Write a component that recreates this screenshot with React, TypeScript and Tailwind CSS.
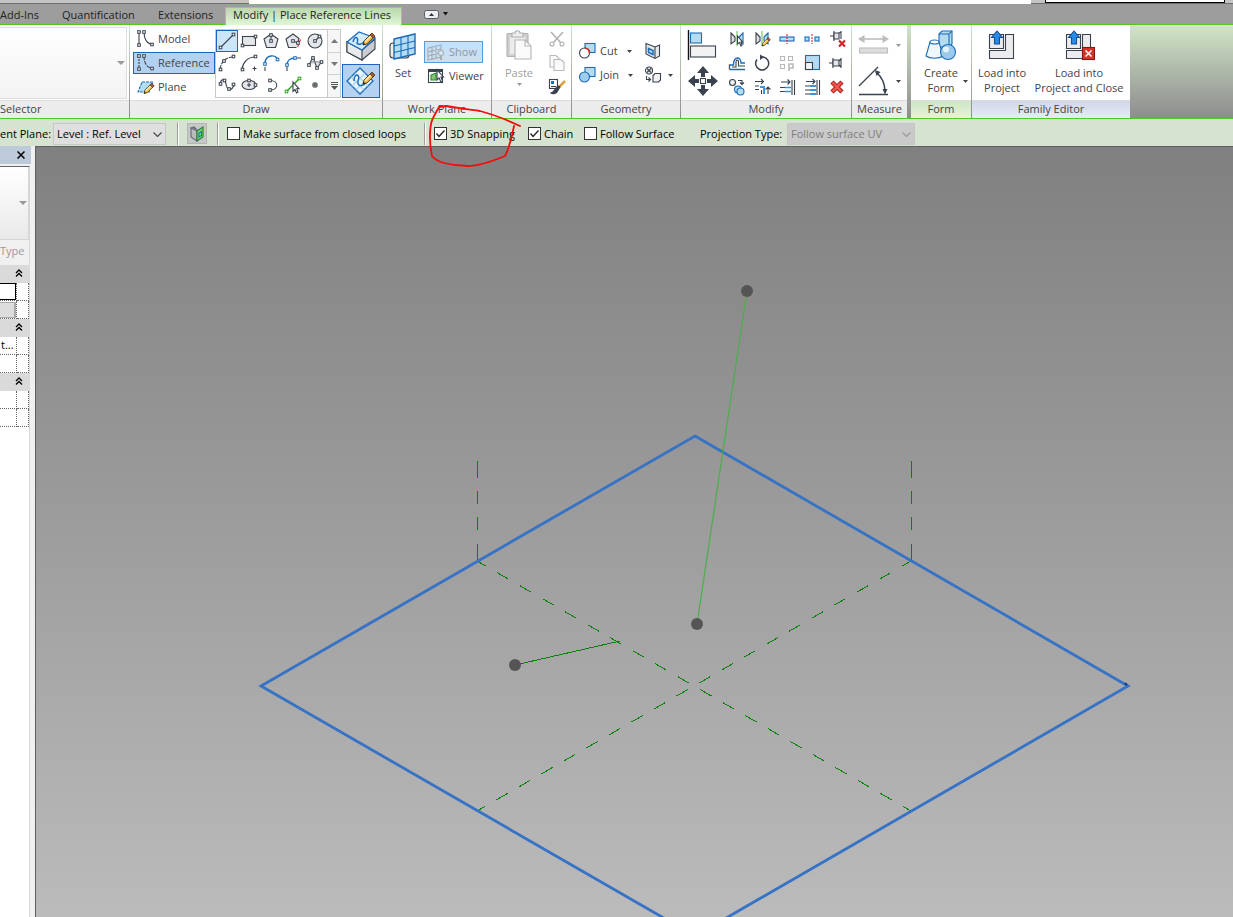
import type { ReactNode } from "react";

const INK = "#39424e";
const BLUE = "#1b6cb8";
const SKY = "#b4dcf3";
const FADED = "#b9b9b9";

function Icon({ size = 18, children }: { size?: number; children: ReactNode }) {
  return (
    <svg
      width={size}
      height={size}
      viewBox={`0 0 ${size} ${size}`}
      fill="none"
      stroke={INK}
      strokeWidth={1.1}
      className="shrink-0"
      aria-hidden="true"
    >
      {children}
    </svg>
  );
}

// Square grips drawn on the sketch icons
function Grips({ at, color = INK }: { at: [number, number][]; color?: string }) {
  return (
    <>
      {at.map(([x, y]) => (
        <rect
          key={`${x}-${y}`}
          x={x - 1.3}
          y={y - 1.3}
          width={2.6}
          height={2.6}
          fill="#fff"
          stroke={color}
          strokeWidth={1}
        />
      ))}
    </>
  );
}

function Pencil() {
  return (
    <>
      <path d="M0 10L1 6L8 -1L11 2L4 9Z" fill="#f6b93f" stroke="#4a3a20" strokeWidth={0.9} />
      <path d="M2 7L9 0" stroke="#fff0b8" strokeWidth={1.4} />
      <path d="M7 0L9 -2L12 1L10 3Z" fill="#a3583a" stroke="#5b2d1c" strokeWidth={0.8} />
      <path d="M0 10L0.6 7.6L2.4 9.4Z" fill="#222" stroke="none" />
    </>
  );
}

function Caret({ faded = false }: { faded?: boolean }) {
  return (
    <svg width="5" height="3" viewBox="0 0 5 3" className="shrink-0" aria-hidden="true">
      <path d="M0 0H5L2.5 3Z" fill={faded ? "#999" : "#444"} />
    </svg>
  );
}

function Panel({
  title,
  className,
  titleClass = "bg-[#ececec] text-center",
  children,
}: {
  title: string;
  className: string;
  titleClass?: string;
  children: ReactNode;
}) {
  return (
    <section className={`flex shrink-0 flex-col bg-white ${className}`}>
      <div className="flex h-[75px]">{children}</div>
      <h2 className={`h-[18px] border-t border-[#dcdcdc] leading-4 whitespace-nowrap ${titleClass}`}>{title}</h2>
    </section>
  );
}

const drawTools: { name: string; icon: ReactNode }[] = [
  {
    name: "Line",
    icon: (
      <>
        <path d="M2 16L16 2" />
        <Grips at={[[2.5, 15.5], [15.5, 2.5]]} />
      </>
    ),
  },
  {
    name: "Rectangle",
    icon: (
      <>
        <rect x="2.5" y="4.5" width="13" height="9" fill="#e4e6ea" />
        <Grips at={[[2.5, 13.5], [15.5, 4.5]]} />
      </>
    ),
  },
  {
    name: "Inscribed Polygon",
    icon: (
      <>
        <path d="M9 2L16 7L13.5 15.5H4.5L2 7Z" fill="#e4e6ea" />
        <path d="M9 9V3" />
        <Grips at={[[9, 9], [9, 3]]} />
      </>
    ),
  },
  {
    name: "Circumscribed Polygon",
    icon: (
      <>
        <path d="M12.5 15.5H4.5L2 7L9 2L15 6.5L14 10" fill="#e4e6ea" />
        <path d="M16.5 7.5L13 16.5" stroke="#e02020" strokeDasharray="3 2" />
        <path d="M9 9L14 11" />
        <Grips at={[[9, 9], [14, 11]]} />
      </>
    ),
  },
  {
    name: "Circle",
    icon: (
      <>
        <circle cx="9" cy="9" r="7" fill="#e4e6ea" />
        <path d="M9 9L13.5 4.5" />
        <Grips at={[[9, 9], [13.5, 4.5]]} />
      </>
    ),
  },
  {
    name: "Start-End-Radius Arc",
    icon: (
      <>
        <path d="M2 15C3 8 8 3 15 3" strokeDasharray="4 1" />
        <Grips at={[[2.5, 15.5], [6, 7], [15.5, 2.5]]} />
      </>
    ),
  },
  {
    name: "Center-ends Arc",
    icon: (
      <>
        <path d="M2 15C3 8 8 3 15 3" />
        <path d="M14.5 12.5V16.5M12.5 14.5H16.5" />
        <Grips at={[[2.5, 15.5], [15.5, 2.5]]} />
      </>
    ),
  },
  {
    name: "Tangent End Arc",
    icon: (
      <>
        <path d="M3 13V17" />
        <path d="M3 10C3 0 14 0 16 6" stroke={BLUE} strokeWidth={1.4} />
        <Grips at={[[3, 10], [15.5, 5.5]]} color={BLUE} />
      </>
    ),
  },
  {
    name: "Fillet Arc",
    icon: (
      <>
        <path d="M3 13V17M13 4H17" />
        <path d="M3 11C3 7 6 4 11 4" stroke={BLUE} strokeWidth={1.4} />
        <Grips at={[[3, 11], [11, 4]]} color={BLUE} />
      </>
    ),
  },
  {
    name: "Spline",
    icon: (
      <>
        <path d="M3 11L7 3L11 14L15.5 8" fill="#e4e6ea" />
        <path d="M3 11C6 5 12 9 15.5 8" stroke="#8a9099" />
        <Grips at={[[3, 11], [7, 4], [11, 14], [15.5, 8]]} />
      </>
    ),
  },
  {
    name: "Spline Through Points",
    icon: (
      <>
        <path d="M2 8C3 2 7 3 8 8C9 15 14 15 16 9" />
        <Grips at={[[2.5, 8], [6.5, 4.5], [11, 13], [15.5, 8.5]]} />
      </>
    ),
  },
  {
    name: "Ellipse",
    icon: (
      <>
        <ellipse cx="9" cy="9" rx="7" ry="4.5" fill="#e4e6ea" />
        <path d="M9 7V11M7 9H11" />
        <Grips at={[[9, 4.5], [15.5, 9]]} />
      </>
    ),
  },
  {
    name: "Partial Ellipse",
    icon: (
      <>
        <path d="M8 4.5C17 4.5 17 14 8 14" />
        <Grips at={[[8, 4.5], [8, 14]]} />
      </>
    ),
  },
  {
    name: "Pick Lines",
    icon: (
      <>
        <path d="M2 16L16 2" stroke="#2ba61c" strokeWidth={1.5} />
        <Grips at={[[2.5, 15.5], [15.5, 2.5]]} color="#2ba61c" />
        <path d="M9 6V15.5L11 13.5L12.5 17L14 16L12.8 12.8H15Z" fill="#fff" />
      </>
    ),
  },
  {
    name: "Point Element",
    icon: <circle cx="9" cy="9" r="2.5" fill="#666" stroke="#8a8f98" />,
  },
];

const modifyTools: { name: string; icon: ReactNode }[] = [
  {
    name: "Mirror - Pick Axis",
    icon: (
      <>
        <path d="M3 3L7 7V11L3 14Z" fill="#ddd" />
        <path d="M15 3L11 7V11L15 14Z" fill={SKY} stroke={BLUE} />
        <path d="M9 1V16" stroke="#6fc25c" />
        <path d="M9.5 6V14L11.5 12.5L13 16L14 15L13 12H14.5Z" fill="#fff" />
      </>
    ),
  },
  {
    name: "Mirror - Draw Axis",
    icon: (
      <>
        <path d="M3 3L7 7V11L3 14Z" fill="#ddd" />
        <path d="M15 3L11 7V11L15 14Z" fill={SKY} stroke={BLUE} />
        <path d="M9 1V16" stroke="#6fc25c" />
        <g transform="translate(9 9) scale(.7)">
          <Pencil />
        </g>
      </>
    ),
  },
  {
    name: "Split Element",
    icon: (
      <>
        <rect x="2" y="7" width="14" height="4" fill={SKY} stroke={BLUE} />
        <path d="M9 4V14" stroke="#d22" strokeDasharray="2 1" />
      </>
    ),
  },
  {
    name: "Split with Gap",
    icon: (
      <>
        <rect x="2" y="7" width="4" height="4" fill={SKY} stroke={BLUE} />
        <rect x="12" y="7" width="4" height="4" fill={SKY} stroke={BLUE} />
        <path d="M9 4V14" stroke="#d22" strokeDasharray="2 1" />
      </>
    ),
  },
  {
    name: "Unpin",
    icon: (
      <>
        <path d="M2 6H6M6 1V11M13 1V9M11 3L13 2" />
        <path d="M6 3H11V9H6Z" fill="#e6e6e6" />
        <path d="M11 10.5L17 16.5M17 10.5L11 16.5" stroke="#d02626" strokeWidth={2.2} />
      </>
    ),
  },
  {
    name: "Offset",
    icon: (
      <>
        <path d="M1.5 15.5H17M1.5 15.5V11H5.5C5.5 2 13 2 13 9H17" stroke={BLUE} strokeWidth={1.4} />
        <path d="M4 13H8V8C8 5.5 10.5 5.5 10.5 8V12H17" />
      </>
    ),
  },
  {
    name: "Rotate",
    icon: (
      <>
        <path d="M4 5.5A6.5 6.5 0 1 0 10 3" strokeWidth={1.5} />
        <path d="M7 0.5L11 3L7 6Z" fill={INK} stroke="none" />
      </>
    ),
  },
  {
    name: "Array",
    icon: (
      <g stroke={FADED}>
        <rect x="2.5" y="2.5" width="4" height="4" />
        <rect x="10.5" y="2.5" width="4" height="4" />
        <rect x="2.5" y="10.5" width="4" height="4" />
        <path d="M11 17V10H15V14H11" strokeWidth={1.6} />
      </g>
    ),
  },
  {
    name: "Scale",
    icon: (
      <>
        <rect x="2.5" y="1.5" width="14" height="14" fill={SKY} stroke={BLUE} />
        <rect x="2.5" y="8.5" width="7" height="7" fill="#f3f3f3" />
      </>
    ),
  },
  {
    name: "Pin",
    icon: (
      <>
        <path d="M1 9H5M5 4V14M13 4V14M11 7L13 5M11 11L13 13" />
        <path d="M5 6H11V12H5Z" fill="#e6e6e6" />
      </>
    ),
  },
  {
    name: "Copy",
    icon: (
      <>
        <circle cx="4.5" cy="4.5" r="3" fill="#eee" />
        <circle cx="10" cy="11.5" r="3.5" fill={SKY} stroke={BLUE} />
        <circle cx="12.5" cy="13.5" r="3.5" fill={SKY} stroke={BLUE} />
        <path d="M10 2.5H14V6M12 4.5L14 6.5L16 4.5" />
      </>
    ),
  },
  {
    name: "Trim/Extend to Corner",
    icon: (
      <>
        <path d="M2 3.5H10M8 1L10.5 3.5L8 6M2 8H6M2 11.5H6M8.5 12V16M15 16V9M12.5 11.5L15 9L17.5 11.5" />
        <path d="M7 9H11V16" stroke="#3c93dd" strokeWidth={2} />
      </>
    ),
  },
  {
    name: "Trim/Extend Single Element",
    icon: (
      <>
        <path d="M3 4H12M9.5 1.5L12 4L9.5 6.5M14 2V17M16.5 2V17M2 9.5H7M2 13.5H7" />
        <path d="M7 9.5H13M7 13.5H13" stroke="#3c93dd" strokeWidth={1.5} />
      </>
    ),
  },
  {
    name: "Trim/Extend Multiple Elements",
    icon: (
      <>
        <path d="M3 3.5H12M9.5 1L12 3.5L9.5 6M14 2V17M16.5 2V17M2 8H7M2 12H7M2 16H7" />
        <path d="M7 8H13M7 12H13M7 16H13" stroke="#3c93dd" strokeWidth={1.8} />
      </>
    ),
  },
  {
    name: "Delete",
    icon: (
      <>
        <path d="M4 4L14 14M14 4L4 14" stroke="#a31515" strokeWidth={4.5} />
        <path d="M4.5 4.5L13.5 13.5M13.5 4.5L4.5 13.5" stroke="#f0564a" strokeWidth={2.5} />
      </>
    ),
  },
];

function TitleStrip() {
  return (
    <div className="flex h-1">
      <div className="w-[249px] border-b border-[#6e6e6e] bg-[#c4c4c4]" />
      <div className="flex-1 bg-white" />
      <div className="w-[202px] border-b border-[#6e6e6e] bg-[#c4c4c4] pr-[8px] pl-[14px]">
        <div className="h-[3px] border-x border-b border-black bg-white" />
      </div>
    </div>
  );
}

function Tabs() {
  return (
    <nav className="flex h-[21px] border-b border-[#56c622] bg-[#9d9d9d] text-[#222]">
      <button className="w-[62px] pt-[2px] text-left">Add-Ins</button>
      <button className="w-[96px] pt-[2px] text-left">Quantification</button>
      <button className="w-[67px] pt-[2px] text-left">Extensions</button>
      <button className="mt-[3px] -mb-px flex w-[177px] border border-b-0 border-[#72e64e] bg-linear-to-b from-[#b9d8ab] to-[#dff7d6] px-[7px] text-left leading-[14px] whitespace-nowrap">
        Modify | Place Reference Lines
      </button>
      <button aria-label="Minimize ribbon" className="ml-[22px] flex items-center gap-[2px]">
        <svg width="16" height="9" viewBox="0 0 16 9" aria-hidden="true">
          <rect x="0.5" y="0.5" width="14" height="8" rx="2" fill="#eef0f4" stroke="#555c68" />
          <path d="M5 6L7.5 3L10 6Z" fill="#333" />
        </svg>
        <svg width="7" height="4" viewBox="0 0 7 4" aria-hidden="true">
          <path d="M1 0H6L3.5 3.5Z" fill="#111" />
        </svg>
      </button>
    </nav>
  );
}

function DrawPanel() {
  return (
    <Panel title="Draw" className="w-[252px]">
      <div className="ml-[3px] flex w-[82px] shrink-0 flex-col gap-[2px] pt-[3px]">
        <button className="flex h-[22px] items-center gap-[3px] border border-transparent px-[3px]">
          <Icon>
            <path d="M2 2V15M7 2C7 9 10 14 15 14" />
            <Grips at={[[2, 2], [2, 15], [7, 2], [15, 14.5]]} />
          </Icon>
          Model
        </button>
        <button className="flex h-[22px] items-center gap-[3px] border border-[#1a66c0] bg-[#b3d1f0] px-[3px]">
          <Icon>
            <path d="M2 2V15" strokeDasharray="2 1" />
            <path d="M7 2C7 9 10 14 15 14" strokeDasharray="4 1" />
            <Grips at={[[2, 2], [2, 15], [7, 2], [15, 14.5]]} />
          </Icon>
          Reference
        </button>
        <button className="flex h-[22px] items-center gap-[3px] border border-transparent px-[3px]">
          <Icon>
            <path d="M5 4H16L12 14H1Z" fill={SKY} stroke={BLUE} strokeDasharray="3 1" />
            <g transform="translate(7 7) scale(.85)">
              <Pencil />
            </g>
          </Icon>
          Plane
        </button>
      </div>
      <div className="mt-1 flex h-[69px] w-[126px] shrink-0 border border-[#c9c9c9]">
        <div className="grid w-[111px] grid-cols-5 content-start pr-px">
          {drawTools.map((tool, i) => (
            <button
              key={tool.name}
              aria-label={tool.name}
              className={
                i === 0
                  ? "flex h-[22px] items-center justify-center border border-[#1a66c0] bg-[#cbe6f7]"
                  : "flex h-[22px] items-center justify-center"
              }
            >
              <Icon>{tool.icon}</Icon>
            </button>
          ))}
        </div>
        <div className="flex w-[13px] flex-col border-l border-[#c9c9c9] bg-[#f6f6f6]">
          <button aria-label="Scroll up" className="flex flex-1 items-center justify-center">
            <svg width="7" height="4" viewBox="0 0 7 4">
              <path d="M0 4H7L3.5 0Z" fill="#777" />
            </svg>
          </button>
          <button
            aria-label="Scroll down"
            className="flex flex-1 items-center justify-center border-y border-[#d0d0d0]"
          >
            <svg width="7" height="4" viewBox="0 0 7 4">
              <path d="M0 0H7L3.5 4Z" fill="#777" />
            </svg>
          </button>
          <button aria-label="More draw tools" className="flex flex-1 items-center justify-center">
            <svg width="7" height="8" viewBox="0 0 7 8">
              <path d="M0 0H7V1H0ZM0 2H7V3H0ZM0 4H7L3.5 8Z" fill="#555" />
            </svg>
          </button>
        </div>
      </div>
      <div className="ml-px flex w-[38px] flex-col pt-[2px]">
        <button aria-label="Draw on Face" className="flex h-[37px] items-center justify-center">
          <Icon size={32}>
            <path d="M2 12V22L17 30L30 19V9L17 20Z" fill="#c9ccd1" />
            <path d="M2 12L17 20V30L2 22Z" fill="#e9eaec" />
            <path d="M2 12L14 2L30 8L17 20Z" fill="#d3ecf9" stroke={BLUE} strokeWidth={1.3} />
            <path d="M8 12C10 4 14 8 12 13C14 16 19 13 19 11" stroke={BLUE} strokeWidth={1.4} />
            <g transform="translate(18 5)">
              <Pencil />
            </g>
          </Icon>
        </button>
        <button
          aria-label="Draw on Work Plane"
          className="flex h-[34px] items-center justify-center border border-[#1a66c0] bg-[#b3d1f0]"
        >
          <Icon size={32}>
            <path d="M2 16L15 3L28 16L15 29Z" fill="#e6f5fd" stroke={BLUE} strokeWidth={1.3} />
            <path d="M6 12L19 25M10 8L23 21M20 8L7 21M24 12L11 25" stroke="#a6d2ee" />
            <path d="M9 16C9 7 16 9 13 16C12 23 19 21 21 17" stroke={BLUE} strokeWidth={1.4} />
            <g transform="translate(18 9)">
              <Pencil />
            </g>
          </Icon>
        </button>
      </div>
    </Panel>
  );
}

function WorkPlanePanel() {
  return (
    <Panel title="Work Plane" className="w-[108px]">
      <button className="ml-1 flex w-8 flex-col items-center pt-[5px]">
        <Icon size={32}>
          <rect x="3" y="13" width="19" height="15" rx="3" fill="#eee" />
          <path d="M7 9L28 4V24L7 29Z" fill={SKY} stroke={BLUE} strokeWidth={1.4} />
          <path d="M14 7.5V27.5M21 6V26M7 16L28 11M7 22.5L28 17.5" stroke={BLUE} />
        </Icon>
        <span className="mt-[3px] leading-4">Set</span>
      </button>
      <div className="flex flex-col gap-[2px] pt-4 pl-[5px]">
        <button
          disabled
          className="flex h-[22px] w-[59px] items-center gap-1 border border-[#5b9bd8] bg-[#c8e0f5] px-[2px] text-[#8e979f]"
        >
          <Icon>
            <path d="M1 5L14 2V14L1 17ZM5 4V16M9 3V15M1 9L14 6M1 13L14 10" stroke="#a5adb5" />
            <circle cx="14" cy="10" r="2.5" fill="#dce8f2" stroke="#a5adb5" />
            <path d="M14 12V17" stroke="#a5adb5" strokeWidth={2} />
          </Icon>
          Show
        </button>
        <button className="flex h-[22px] items-center gap-1 px-[3px]">
          <Icon>
            <rect x="1.5" y="2.5" width="14" height="13" fill="#fff" />
            <path d="M1 3.5H16" strokeWidth={3} />
            <path d="M4 8L9 6V13H4Z" fill="#7cc576" stroke="#2f8a2a" />
            <path d="M10 3V13L12 11L14 15L15.5 14L14 10H16.5Z" fill="#fff" />
          </Icon>
          Viewer
        </button>
      </div>
    </Panel>
  );
}

function ClipboardPanel() {
  return (
    <Panel title="Clipboard" className="w-[79px]">
      <button disabled className="ml-[9px] flex w-9 flex-col items-center pt-1 text-[#a0a0a0]">
        <Icon size={32}>
          <rect x="4" y="4.5" width="21" height="23" rx="1" fill="#cfcfcf" stroke="#b0b0b0" />
          <rect x="7" y="8" width="15" height="17" fill="#ececec" stroke="none" />
          <path d="M9 8V4H12C12 1 17 1 17 4H20V8Z" fill="#eee" stroke="#b0b0b0" />
          <path d="M12 11H22L28 17V30H12Z" fill="#fafafa" stroke="#b5b5b5" />
          <path d="M22 11V17H28" stroke="#b5b5b5" />
        </Icon>
        <span className="mt-1 mb-[2px] leading-4">Paste</span>
        <Caret faded />
      </button>
      <div className="ml-[11px] flex flex-col pt-[2px]">
        <button disabled aria-label="Cut to clipboard" className="flex h-6 items-center">
          <Icon>
            <g stroke="#b0b0b0">
              <path d="M3 2L13 13M15 2L5 13" strokeWidth={1.5} />
              <circle cx="4" cy="14" r="2" />
              <circle cx="14" cy="14" r="2" />
            </g>
          </Icon>
        </button>
        <button disabled aria-label="Copy to clipboard" className="flex h-6 items-center">
          <Icon>
            <g stroke={FADED} fill="#fafafa">
              <path d="M2 1.5H8L11 4.5V13H2Z" />
              <path d="M6 5.5H13L16 8.5V16.5H6Z" />
            </g>
          </Icon>
        </button>
        <button aria-label="Match Type Properties" className="flex h-6 items-center">
          <Icon>
            <rect x="1.5" y="1.5" width="8" height="9" fill="#fff" />
            <rect x="3" y="3" width="3" height="3" fill={BLUE} stroke="none" />
            <path d="M3 8.5H8" />
            <path d="M17 3L11 9" stroke="#d9a441" strokeWidth={2.5} />
            <path d="M12 9L9 14C8 16 4 16 3 15C6 14 6 12 10 8Z" fill={INK} />
          </Icon>
        </button>
      </div>
    </Panel>
  );
}

function GeometryPanel() {
  return (
    <Panel title="Geometry" className="w-[108px]">
      <div className="flex w-[67px] flex-col pt-[14px] pl-[6px]">
        <button className="flex h-6 items-center gap-1">
          <Icon>
            <rect x="7" y="1.5" width="10" height="9" fill={SKY} stroke={BLUE} />
            <circle cx="6.5" cy="11" r="5" fill="#fff" />
            <path d="M7 6C10 6.5 11.5 8 11.5 11" stroke="#e02020" strokeWidth={1.6} />
          </Icon>
          Cut
          <span className="ml-[5px]">
            <Caret />
          </span>
        </button>
        <button className="flex h-6 items-center gap-1">
          <Icon>
            <rect x="7" y="1.5" width="10" height="9" fill={SKY} stroke={BLUE} />
            <circle cx="6.5" cy="11" r="5" fill="#9fcdee" stroke={BLUE} />
          </Icon>
          Join
          <span className="ml-[5px]">
            <Caret />
          </span>
        </button>
      </div>
      <div className="ml-[5px] flex flex-col pt-[14px]">
        <button aria-label="Wall opening" className="flex h-6 items-center">
          <Icon>
            <path d="M2 1.5L6 3L11 5L15.5 3V14L11 16.5L2 12Z" fill="#e8e8e8" />
            <path d="M11 5V16.5" />
            <path d="M4.5 6.5L9 8.5V12.5L4.5 10.5Z" fill={SKY} stroke={BLUE} strokeWidth={1.5} />
          </Icon>
        </button>
        <button aria-label="Split face" className="flex h-6 items-center gap-[6px]">
          <Icon>
            <circle cx="5" cy="4.5" r="3.5" fill="#eee" />
            <path d="M3 2.5L7 6.5M7 2.5L3 6.5M2.5 10V13.5H6M4.5 11.5L6.5 13.5L4.5 15.5" />
            <path d="M9 9.5L11 7.5H16.5V14L14.5 16H9Z" fill="#f2f2f2" />
          </Icon>
          <Caret />
        </button>
      </div>
    </Panel>
  );
}

function ModifyPanel() {
  return (
    <Panel title="Modify" className="w-[170px]">
      <div className="flex w-[43px] shrink-0 flex-col items-center pt-[2px]">
        <button aria-label="Align" className="flex h-9 items-center">
          <Icon size={32}>
            <path d="M1.5 1V31" stroke="#111" strokeWidth={1.4} />
            <rect x="3.5" y="4" width="11" height="10" fill={SKY} stroke={BLUE} />
            <rect x="3.5" y="17" width="25" height="11" fill="#f2f2f2" />
          </Icon>
        </button>
        <button aria-label="Move" className="flex h-9 items-center">
          <Icon size={32}>
            <g fill={INK} stroke="none">
              <path d="M16 1L22 8H18V12H14V8H10Z" />
              <path d="M16 31L22 24H18V20H14V24H10Z" />
              <path d="M1 16L8 10V14H12V18H8V22Z" />
              <path d="M31 16L24 10V14H20V18H24V22Z" />
            </g>
            <rect x="13.5" y="13.5" width="5" height="5" fill="#fff" />
          </Icon>
        </button>
      </div>
      <div className="grid w-[125px] grid-cols-5 content-start pt-[2px]">
        {modifyTools.map((tool) => (
          <button key={tool.name} aria-label={tool.name} className="flex h-6 items-center justify-center">
            <Icon>{tool.icon}</Icon>
          </button>
        ))}
      </div>
    </Panel>
  );
}

function MeasurePanel() {
  return (
    <Panel title="Measure" className="w-[55px]">
      <div className="flex flex-col pt-[2px] pl-[6px]">
        <button
          disabled
          aria-label="Measure between two references"
          className="flex h-9 items-center gap-[6px]"
        >
          <Icon size={32}>
            <g stroke="#bdbdbd">
              <path d="M3 10H29" strokeWidth={1.6} />
              <path d="M6 7L1 10L6 13ZM25 7L30 10L25 13Z" fill="#bdbdbd" />
              <rect x="1.5" y="19" width="28" height="5" fill="#ddd" />
            </g>
          </Icon>
          <Caret faded />
        </button>
        <button aria-label="Angular dimension" className="flex h-9 items-center gap-[6px]">
          <Icon size={32}>
            <path d="M1 29.5H30M1 21L20 2" strokeWidth={1.3} />
            <path d="M18 7C24 12 27 19 27 27" strokeWidth={1.5} />
            <path d="M17 5L22.5 7L18.5 11ZM24.5 24H29.5L27 29.500Z" fill={INK} stroke="none" />
          </Icon>
          <Caret />
        </button>
      </div>
    </Panel>
  );
}

function LoadIcon({ close = false }: { close?: boolean }) {
  return (
    <Icon size={32}>
      <path d="M3.5 5.5H17.5V19.5H3.5Z" fill="#ececef" />
      <path d="M19.5 5.5H27.5V29.5H3.5V21.5H19.5Z" fill="#ececef" />
      <path d="M11 2L16.500 8.500H13.500V15H8.500V8.500H5.500Z" fill="#2a8ae6" stroke="#124f96" />
      {close && (
        <>
          <rect x="19.5" y="18.5" width="12" height="12" fill="#d3352c" stroke="#8d1410" />
          <path d="M22.5 21.5L28.5 27.5M28.5 21.5L22.5 27.5" stroke="#fff" strokeWidth={1.5} />
        </>
      )}
    </Icon>
  );
}

function Ribbon() {
  return (
    <div className="flex h-[94px] gap-px overflow-hidden border-b border-[#56c622] bg-linear-to-b from-[#d0e5c6] to-[#8d8d8d] text-[#444]">
      <Panel title="Selector" className="w-[129px]" titleClass="bg-[#ececec]">
        <button
          aria-label="Type selector"
          className="mt-[2px] flex h-[72px] w-[127px] items-center justify-end border border-l-0 border-[#dedede] bg-linear-to-b from-white to-[#f3f3f3] pr-px"
        >
          <svg width="8" height="4" viewBox="0 0 8 4">
            <path d="M0 0H8L4 4Z" fill="#9a9a9a" />
          </svg>
        </button>
      </Panel>
      <DrawPanel />
      <WorkPlanePanel />
      <ClipboardPanel />
      <GeometryPanel />
      <ModifyPanel />
      <MeasurePanel />
      <Panel
        title="Form"
        className="ml-[3px] w-[60px]"
        titleClass="bg-linear-to-b from-[#cfe6c4] to-[#e2f4da] text-center"
      >
        <button className="flex w-full flex-col items-center pt-1">
          <Icon size={32}>
            <path d="M14 5L17 2H27V15L24 18H14Z" fill={SKY} stroke={BLUE} />
            <path d="M14 5H24L27 2M24 5V18" stroke={BLUE} />
            <path d="M5 13L1 27C5 30 14 30 18 27L14 13Z" fill="#edf7fd" stroke={BLUE} />
            <ellipse cx="9.5" cy="13" rx="4.5" ry="2" fill="#fff" stroke={BLUE} />
            <circle cx="23" cy="23" r="7.5" fill="#9bcbea" stroke={BLUE} />
            <circle cx="21" cy="20.5" r="3" fill="#e2f3fd" stroke="none" />
          </Icon>
          <span className="mt-1 leading-[15px]">Create</span>
          <span className="flex gap-[9px] pl-[14px] leading-[15px]">
            Form
            <Caret />
          </span>
        </button>
      </Panel>
      <Panel
        title="Family Editor"
        className="w-[158px]"
        titleClass="bg-linear-to-b from-[#d0d7e8] to-[#e6ebf7] text-center"
      >
        <button className="flex w-[60px] flex-col items-center pt-1 leading-[15px]">
          <LoadIcon />
          <span className="mt-1 whitespace-nowrap">Load into</span>
          <span>Project</span>
        </button>
        <button className="flex w-[94px] flex-col items-center pt-1 leading-[15px]">
          <LoadIcon close />
          <span className="mt-1">Load into</span>
          <span className="whitespace-nowrap">Project and Close</span>
        </button>
      </Panel>
    </div>
  );
}

function Separator({ className }: { className: string }) {
  return <span className={`h-[22px] w-[2px] shrink-0 border-l border-[#9b9b9b] bg-white ${className}`} />;
}

function CheckOption({
  label,
  checked = false,
  className,
}: {
  label: string;
  checked?: boolean;
  className: string;
}) {
  return (
    <label className={`flex shrink-0 items-center gap-[3px] whitespace-nowrap ${className}`}>
      <span className="relative flex">
        <input
          type="checkbox"
          defaultChecked={checked}
          className="peer size-[13px] appearance-none border border-[#333] bg-white"
        />
        <svg
          viewBox="0 0 13 13"
          className="pointer-events-none absolute inset-0 hidden size-[13px] peer-checked:block"
          fill="none"
          stroke="#222"
          strokeWidth={1.3}
        >
          <path d="M2.5 6.5L5 9.5L10.5 3.5" />
        </svg>
      </span>
      {label}
    </label>
  );
}

function Chevron({ className }: { className: string }) {
  return (
    <svg
      width="9"
      height="5"
      viewBox="0 0 9 5"
      fill="none"
      strokeWidth={1.1}
      className={`pointer-events-none absolute top-[9px] right-1 ${className}`}
    >
      <path d="M0.5 0.5L4.5 4.5L8.5 0.5" />
    </svg>
  );
}

function OptionsBar() {
  return (
    <div className="flex h-[27px] items-center overflow-hidden bg-[#d7e3d1] pt-[2px] text-black">
      <label htmlFor="placement" className="w-[53px] shrink-0 whitespace-nowrap">
        ent Plane:
      </label>
      <div className="relative w-[113px] shrink-0">
        <select
          id="placement"
          className="h-[22px] w-full appearance-none border border-[#c6c6c6] bg-[#dedfde] pl-[3px]"
        >
          <option>Level : Ref. Level</option>
        </select>
        <Chevron className="stroke-[#444]" />
      </div>
      <Separator className="ml-[11px]" />
      <button
        aria-label="Show host face"
        className="ml-2 flex h-[21px] w-5 shrink-0 items-center justify-center border border-[#b5b5b5] bg-[#c6c8c6]"
      >
        <Icon>
          <path d="M3 3L9 6V16L3 12Z" fill="#b9bdb9" stroke="#667" />
          <path d="M6 2L9 5M3 3L6 2V4" stroke="#667" />
          <path d="M9 6L15 2V12L9 16Z" fill="#6fe06a" stroke="#2c7a30" />
          <path d="M11 8L13.5 6.5V10.5L11 12Z" stroke="#1d6fc0" />
        </Icon>
      </button>
      <Separator className="ml-[10px]" />
      <CheckOption label="Make surface from closed loops" className="ml-[8px] w-[196px]" />
      <Separator className="ml-px" />
      <CheckOption label="3D Snapping" checked className="ml-[8px] w-[94px]" />
      <CheckOption label="Chain" checked className="w-[56px]" />
      <CheckOption label="Follow Surface" className="w-[116px]" />
      <label htmlFor="projection" className="w-[87px] shrink-0 whitespace-nowrap">
        Projection Type:
      </label>
      <div className="relative w-[128px] shrink-0">
        <select
          id="projection"
          disabled
          className="h-[22px] w-full appearance-none border border-[#c6c6c6] bg-[#c9cac9] pl-[3px] text-[#7d7d7d] opacity-100"
        >
          <option>Follow surface UV</option>
        </select>
        <Chevron className="stroke-[#999]" />
      </div>
    </div>
  );
}

function GroupHeader() {
  return (
    <tr>
      <th colSpan={2} className="h-[18px] bg-[#dadada] p-0">
        <button aria-label="Collapse group" className="mb-[2px] ml-[15px] flex">
          <svg width="8" height="8" viewBox="0 0 8 8" fill="none" stroke="#000" strokeWidth={1.3}>
            <path d="M1 4L4 1L7 4M1 7.5L4 4.5L7 7.5" />
          </svg>
        </button>
      </th>
    </tr>
  );
}

function PropertyRow({ children }: { children?: ReactNode }) {
  return (
    <tr>
      <td className="h-[18px] w-[17px] border-r border-b border-dotted border-[#666] p-0">{children}</td>
      <td className="h-[18px] w-3 border-r border-b border-dotted border-[#666] p-0" />
    </tr>
  );
}

function PropertiesPalette() {
  return (
    <aside className="flex w-[35px] shrink-0 flex-col bg-[#f0f0f0]">
      <div className="flex h-[18px] w-[31px] justify-end bg-[#bccad9] pr-[6px]">
        <button aria-label="Close palette">
          <svg width="8" height="8" viewBox="0 0 8 8" stroke="#000" strokeWidth={1.5}>
            <path d="M0.5 0.5L7.5 7.5M7.5 0.5L0.5 7.5" />
          </svg>
        </button>
      </div>
      <div className="mt-[2px] flex w-[30px] flex-1 flex-col border-t border-r border-t-[#666] border-r-[#d8d8d8]">
        <button
          aria-label="Family type"
          className="flex h-[73px] w-[29px] shrink-0 items-center justify-end border-r border-b border-[#d5d5d5] bg-linear-to-b from-white to-[#e9e9e9] pr-px"
        >
          <svg width="8" height="4" viewBox="0 0 8 4">
            <path d="M0 0H8L4 4Z" fill="#999" />
          </svg>
        </button>
        <button disabled className="flex h-[25px] w-full shrink-0 pt-[3px] text-left text-[#9a9a9a]">
          Type
        </button>
        <div className="flex-1 bg-white">
          <table className="w-[29px] table-fixed border-separate border-spacing-0">
            <colgroup>
              <col className="w-[17px]" />
              <col className="w-3" />
            </colgroup>
            <tbody>
              <GroupHeader />
              <PropertyRow>
                <input
                  aria-label="Work plane"
                  className="block h-[17px] w-4 border border-l-0 border-black bg-white"
                />
              </PropertyRow>
              <PropertyRow>
                <input
                  aria-label="Offset"
                  disabled
                  className="block h-4 w-4 border border-r-2 border-l-0 border-[#aaa] bg-[#ddd]"
                />
              </PropertyRow>
              <GroupHeader />
              <PropertyRow>
                <button className="flex h-4 w-4 pl-px leading-[14px]">t...</button>
              </PropertyRow>
              <PropertyRow />
              <GroupHeader />
              <PropertyRow />
              <PropertyRow />
            </tbody>
          </table>
        </div>
      </div>
    </aside>
  );
}

function ModelView() {
  return (
    <main className="relative flex-1 overflow-hidden border-t border-l border-[#5f5f5f] bg-linear-to-b from-[#808080] to-[#bbbbbb]">
      <svg className="absolute inset-0 h-full w-full" fill="none" role="img" aria-label="3D view">
        <g transform="translate(-36 -147)">
          <g stroke="#0a7f0a" shapeRendering="crispEdges">
            <path d="M477.5 461V478M477.5 491V504M477.5 517V530M477.5 544V561" />
            <path d="M911.5 461V478M911.5 491V504M911.5 517V530M911.5 544V561" />
            <path d="M477 561L911 811M911 561L477 811" strokeDasharray="13 13" strokeDashoffset="2.5" />
            <path d="M515 665L620 641" />
          </g>
          <path d="M695 436L1128 686L695 936L261 686Z" stroke="#3672c5" strokeWidth={2.8} />
          <path d="M747 291L697 624" stroke="#4bae4b" strokeWidth={1.2} />
          <path d="M1125 683L1127 685" stroke="#12348a" strokeWidth={2} />
          <g fill="#555">
            <circle cx="747" cy="291" r="6" />
            <circle cx="697" cy="624" r="6" />
            <circle cx="515" cy="665" r="6" />
          </g>
        </g>
      </svg>
    </main>
  );
}

// Freehand red loop around the 3D Snapping option
function Markup() {
  return (
    <svg
      className="pointer-events-none absolute top-[100px] left-[425px]"
      width="100"
      height="72"
      viewBox="425 100 100 72"
      fill="none"
      stroke="#f20d0d"
      strokeWidth={1.8}
      strokeLinecap="round"
      aria-hidden="true"
    >
      <path d="M520 126C505 119 492 114 480 111C467 109 452 107 446 106L439 107C436 113 432 118 431 124C429 135 430 146 432 156C436 161 440 162 444 163C452 165 460 166 468 166C478 166 488 163 505 156C509 149 509 144 511 140L514 126" />
    </svg>
  );
}

export default function App() {
  return (
    <div className="relative flex min-h-screen flex-col overflow-hidden bg-[#d7e3d1] font-['Open_Sans',sans-serif] text-[11px] leading-4">
      <TitleStrip />
      <Tabs />
      <Ribbon />
      <OptionsBar />
      <div className="flex flex-1">
        <PropertiesPalette />
        <ModelView />
      </div>
      <Markup />
    </div>
  );
}
